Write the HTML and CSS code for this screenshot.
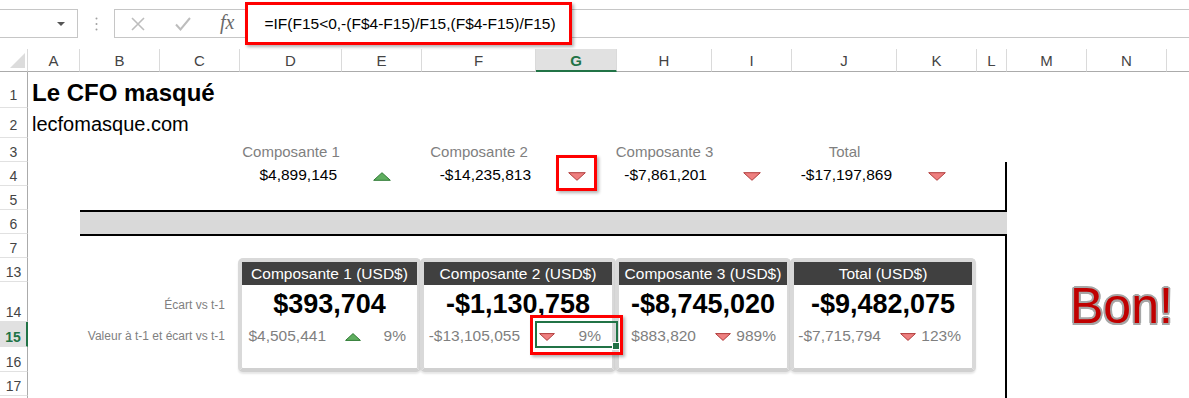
FILE: index.html
```html
<!DOCTYPE html>
<html lang="fr">
<head>
    <meta charset="UTF-8">
    <meta name="viewport" content="width=device-width, initial-scale=1.0">
    <title>Le CFO masqué</title>
    <link rel="stylesheet" href="styles.css">
</head>
<body>
    <!-- Formula bar -->
    <div class="formula-bar">
        <div class="name-box"><span class="name-arrow"></span></div>
        <div class="bar-grip">
            <svg width="3" height="14" viewBox="0 0 3 14"><circle cx="1.5" cy="1.5" r="1" fill="#a0a0a0"/><circle cx="1.5" cy="7" r="1" fill="#a0a0a0"/><circle cx="1.5" cy="12.5" r="1" fill="#a0a0a0"/></svg>
        </div>
        <div class="formula-area">
            <svg class="fb-cancel" width="14" height="14" viewBox="0 0 14 14"><path d="M1 1 L13 13 M13 1 L1 13" stroke="#bdbdbd" stroke-width="1.6" fill="none"/></svg>
            <svg class="fb-enter" width="16" height="14" viewBox="0 0 16 14"><path d="M1 7.5 L5.5 12.5 L15 1" stroke="#bdbdbd" stroke-width="2" fill="none"/></svg>
            <span class="fb-fx">fx</span>
            <div class="formula-text">=IF(F15&lt;0,-(F$4-F15)/F15,(F$4-F15)/F15)</div>
        </div>
    </div>

    <!-- Sheet -->
    <div class="sheet">
        <div class="corner"><svg width="27" height="22" viewBox="0 0 27 22"><polygon points="25,4 25,19 10,19" fill="#dcdcdc"/></svg></div>
        <div class="ch">A</div>
        <div class="ch">B</div>
        <div class="ch">C</div>
        <div class="ch">D</div>
        <div class="ch">E</div>
        <div class="ch">F</div>
        <div class="ch ch-active">G</div>
        <div class="ch">H</div>
        <div class="ch">I</div>
        <div class="ch">J</div>
        <div class="ch">K</div>
        <div class="ch">L</div>
        <div class="ch">M</div>
        <div class="ch">N</div>
        <div class="ch ch-empty"></div>

        <div class="rh r1">1</div>
        <div class="rh r2">2</div>
        <div class="rh r3">3</div>
        <div class="rh r4">4</div>
        <div class="rh r5">5</div>
        <div class="rh r6">6</div>
        <div class="rh r7">7</div>
        <div class="rh r13">13</div>
        <div class="rh r14">14</div>
        <div class="rh rh-active r15">15</div>
        <div class="rh r16">16</div>
        <div class="rh r17">17</div>
        <div class="rh r18"></div>

        <div class="cell title r1">Le CFO masqué</div>
        <div class="cell site r2">lecfomasque.com</div>

        <div class="cell head-lbl r3 cD">Composante 1</div>
        <div class="cell head-lbl r3 cF">Composante 2</div>
        <div class="cell head-lbl r3 cH">Composante 3</div>
        <div class="cell head-lbl r3 cJ">Total</div>

        <div class="cell num r4 cD">$4,899,145</div>
        <div class="cell ico r4 cE"><svg width="18" height="9" viewBox="0 0 18 9"><polygon points="9,0.7 17.3,8.3 0.7,8.3" fill="#5fae5f" stroke="#2e7a34" stroke-width="1"/></svg></div>
        <div class="cell num r4 cF">-$14,235,813</div>
        <div class="cell ico r4 cG"><svg width="18" height="9" viewBox="0 0 18 9"><polygon points="0.7,0.7 17.3,0.7 9,8.3" fill="#ee8080" stroke="#b03c3c" stroke-width="1"/></svg></div>
        <div class="cell num r4 cH">-$7,861,201</div>
        <div class="cell ico r4 cI"><svg width="18" height="9" viewBox="0 0 18 9"><polygon points="0.7,0.7 17.3,0.7 9,8.3" fill="#ee8080" stroke="#b03c3c" stroke-width="1"/></svg></div>
        <div class="cell num r4 cJ">-$17,197,869</div>
        <div class="cell ico r4 cK"><svg width="18" height="9" viewBox="0 0 18 9"><polygon points="0.7,0.7 17.3,0.7 9,8.3" fill="#ee8080" stroke="#b03c3c" stroke-width="1"/></svg></div>
        <div class="mark mark-g4"></div>

        <div class="vline vline-top"></div>
        <div class="band"></div>
        <div class="vline vline-bottom"></div>

        <div class="cell side-lbl side-14 r14">Écart vs t-1</div>
        <div class="cell side-lbl side-15 r15">Valeur à t-1 et écart vs t-1</div>

        <div class="card card-1">
            <div class="card-head">Composante 1 (USD$)</div>
            <div class="card-big">$393,704</div>
            <div class="card-sub">
                <span class="card-prev">$4,505,441</span>
                <span class="card-pct"><svg width="16" height="8" viewBox="0 0 16 8"><polygon points="8,0.6 15.4,7.4 0.6,7.4" fill="#5fae5f" stroke="#2e7a34" stroke-width="1"/></svg>9%</span>
            </div>
        </div>
        <div class="card card-2">
            <div class="card-head">Composante 2 (USD$)</div>
            <div class="card-big">-$1,130,758</div>
            <div class="card-sub">
                <span class="card-prev">-$13,105,055</span>
                <span class="card-pct"><svg width="16" height="8" viewBox="0 0 16 8"><polygon points="0.6,0.6 15.4,0.6 8,7.4" fill="#ee8080" stroke="#b03c3c" stroke-width="1"/></svg>9%</span>
            </div>
        </div>
        <div class="card card-3">
            <div class="card-head">Composante 3 (USD$)</div>
            <div class="card-big">-$8,745,020</div>
            <div class="card-sub">
                <span class="card-prev">$883,820</span>
                <span class="card-pct"><svg width="16" height="8" viewBox="0 0 16 8"><polygon points="0.6,0.6 15.4,0.6 8,7.4" fill="#ee8080" stroke="#b03c3c" stroke-width="1"/></svg>989%</span>
            </div>
        </div>
        <div class="card card-4">
            <div class="card-head">Total (USD$)</div>
            <div class="card-big">-$9,482,075</div>
            <div class="card-sub">
                <span class="card-prev">-$7,715,794</span>
                <span class="card-pct"><svg width="16" height="8" viewBox="0 0 16 8"><polygon points="0.6,0.6 15.4,0.6 8,7.4" fill="#ee8080" stroke="#b03c3c" stroke-width="1"/></svg>123%</span>
            </div>
        </div>

        <div class="sel"></div>
        <div class="mark mark-g15"></div>

        <div class="bon">Bon!</div>
    </div>
</body>
</html>
```

FILE: styles.css
```css
/* General */
* {
    box-sizing: border-box;
}

body {
    margin: 0;
    background: #fff;
    color: #000;
    font-family: "Liberation Sans", Arial, sans-serif;
    overflow: hidden;
}

/* Formula bar */
.formula-bar {
    display: flex;
    align-items: center;
    height: 29px;
    margin: 9px 0 11px;
}

.name-box {
    width: 78px;
    height: 29px;
    border: 1px solid #c6c6c6;
    border-left: none;
    display: flex;
    align-items: center;
    justify-content: flex-end;
    padding-right: 12px;
}

.name-arrow {
    width: 0;
    height: 0;
    border-left: 4px solid transparent;
    border-right: 4px solid transparent;
    border-top: 4px solid #555;
}

.bar-grip {
    width: 36px;
    display: flex;
    justify-content: center;
}

.formula-area {
    flex: 1;
    height: 29px;
    border: 1px solid #c6c6c6;
    border-right: none;
    display: flex;
    align-items: center;
    padding-left: 16px;
}

.fb-cancel {
    margin-right: 30px;
}

.fb-enter {
    margin-right: 29px;
}

.fb-fx {
    font-family: "Liberation Serif", serif;
    font-style: italic;
    font-size: 20px;
    color: #6a6a6a;
    margin-right: 11px;
    margin-top: -2px;
}

.formula-text {
    width: 327px;
    height: 43px;
    border: 3px solid #ff0000;
    box-shadow: 2px 2px 3px rgba(0, 0, 0, 0.3);
    padding-left: 16px;
    font-size: 15.5px;
    line-height: 37px;
    white-space: nowrap;
    background: #fff;
}

/* Sheet grid */
.sheet {
    display: grid;
    grid-template-columns: [rh] 28px [a] 52px [b] 80px [c] 80px [d] 102px [e] 80px [f] 114px [g] 81px [h] 95px [i] 80px [j] 105px [k] 80px [l] 30px [m] 80px [n] 80px [o] 1fr;
    grid-template-rows: [hdr] 23px [r1] 36px [r2] 30px [r3] 24px [r4] 24px [r5] 24px [r6] 24px [r7] 24px [r13] 24px [r14] 40px [r15] 25px [r16] 25px [r17] 24px [r18] 2px;
}

.r1 { grid-row: r1; }
.r2 { grid-row: r2; }
.r3 { grid-row: r3; }
.r4 { grid-row: r4; }
.r5 { grid-row: r5; }
.r6 { grid-row: r6; }
.r7 { grid-row: r7; }
.r13 { grid-row: r13; }
.r14 { grid-row: r14; }
.r15 { grid-row: r15; }
.r16 { grid-row: r16; }
.r17 { grid-row: r17; }
.r18 { grid-row: r18; }

.cD { grid-column: d; }
.cE { grid-column: e; }
.cF { grid-column: f; }
.cG { grid-column: g; }
.cH { grid-column: h; }
.cI { grid-column: i; }
.cJ { grid-column: j; }
.cK { grid-column: k; }

/* Headers */
.corner {
    grid-row: hdr;
    border-right: 1px solid #dadada;
    border-bottom: 1px solid #ababab;
}

.corner svg {
    display: block;
}

.ch {
    grid-row: hdr;
    border-right: 1px solid #dadada;
    border-bottom: 1px solid #ababab;
    text-align: center;
    font-size: 15px;
    line-height: 22px;
    padding-top: 1px;
    color: #444;
}

.ch-empty {
    border-right: none;
}

.ch-active {
    background: #e1e1e1;
    color: #217346;
    font-weight: bold;
    border-bottom: 2px solid #217346;
    line-height: 21px;
}

.rh {
    grid-column: rh;
    border-right: 1px solid #ababab;
    border-bottom: 1px solid #e1e1e1;
    display: flex;
    align-items: flex-end;
    justify-content: center;
    padding-bottom: 1px;
    font-size: 14px;
    color: #444;
}

.rh.r1,
.rh.r2 {
    padding-bottom: 4px;
}

.rh.r18 {
    border-bottom: none;
}

.rh-active {
    background: #e1e1e1;
    color: #217346;
    font-weight: bold;
    border-right: 2px solid #217346;
}

/* Cells */
.cell {
    display: flex;
    align-items: flex-end;
    padding: 0 4px 2px;
    white-space: nowrap;
    font-size: 15.5px;
}

.title {
    grid-column: a / l;
    font-size: 24px;
    font-weight: bold;
    padding-bottom: 1px;
}

.site {
    grid-column: a / l;
    font-size: 20px;
}

.head-lbl {
    justify-content: center;
    color: #7f7f7f;
    font-size: 15px;
}

.num {
    justify-content: flex-end;
    padding-right: 5px;
}

.ico {
    justify-content: center;
    padding-bottom: 5px;
}

.ico svg {
    display: block;
}

.side-lbl {
    grid-column: a / d;
    justify-content: flex-end;
    padding-right: 15px;
    font-size: 12px;
    color: #7f7f7f;
}

.side-14 {
    padding-bottom: 10px;
}

.side-15 {
    padding-bottom: 4px;
}

/* Borders of the frame */
.band {
    grid-column: b / m;
    grid-row: r6;
    background: #d9d9d9;
    border-top: 2px solid #000;
    border-bottom: 2px solid #000;
    margin-bottom: -2px;
}

.vline {
    grid-column: l;
    border-right: 2px solid #000;
}

.vline-top {
    grid-row: r4 / r6;
}

.vline-bottom {
    grid-row: r7 / -1;
}

/* KPI cards */
.card {
    grid-row: r13 / r17;
    margin: 0 1px 0 -2px;
    border: 4px solid #d9d9d9;
    border-bottom-color: #d0d0d0;
    border-radius: 5px;
    background: #fff;
    box-shadow: 0 2px 2px rgba(0, 0, 0, 0.1);
    display: flex;
    flex-direction: column;
}

.card-1 { grid-column: d / f; }
.card-2 { grid-column: f / h; }
.card-3 { grid-column: h / j; }
.card-4 { grid-column: j / l; }

.card-head {
    height: 23px;
    background: #404040;
    color: #fff;
    text-align: center;
    font-size: 15.5px;
    line-height: 23px;
    white-space: nowrap;
}

.card-big {
    height: 37px;
    line-height: 38px;
    text-align: center;
    font-size: 27px;
    font-weight: bold;
    white-space: nowrap;
}

.card-sub {
    display: grid;
    height: 25px;
    padding-top: 2px;
    font-size: 15.5px;
    line-height: 23px;
    color: #7f7f7f;
    white-space: nowrap;
}

.card-1 .card-sub { grid-template-columns: 100px 1fr; }
.card-2 .card-sub { grid-template-columns: 112px 1fr; }
.card-3 .card-sub { grid-template-columns: 93px 1fr; }
.card-4 .card-sub { grid-template-columns: 103px 1fr; }

.card-prev {
    text-align: right;
    padding-right: 16px;
}

.card-pct {
    display: flex;
    align-items: baseline;
    justify-content: space-between;
    padding: 0 11px 0 3px;
}

/* Active cell and annotations */
.sel {
    grid-column: g;
    grid-row: r15;
    margin: -1px;
    border: 2px solid #217346;
    position: relative;
    z-index: 2;
}

.sel::after {
    content: "";
    position: absolute;
    right: -4px;
    bottom: -4px;
    width: 6px;
    height: 6px;
    background: #217346;
    border: 1px solid #fff;
}

.mark {
    grid-column: g;
    border: 3px solid #ff0000;
    box-shadow: 2px 2px 3px rgba(0, 0, 0, 0.3);
    z-index: 3;
}

.mark-g4 {
    grid-row: r4;
    width: 41px;
    justify-self: center;
    margin: -7px 0 -5px;
}

.mark-g15 {
    grid-row: r15;
    margin: -7px -6px -8px -6px;
}

.bon {
    grid-column: m / -1;
    grid-row: r14 / r16;
    padding-left: 63px;
    margin-top: -1px;
    font-size: 50px;
    line-height: 1;
    color: #c00000;
    white-space: nowrap;
    text-shadow: -2px 0 #a6a6a6, 2px 0 #a6a6a6, 0 -2px #a6a6a6, 0 2px #a6a6a6,
        -1.5px -1.5px #a6a6a6, 1.5px -1.5px #a6a6a6, -1.5px 1.5px #a6a6a6, 1.5px 1.5px #a6a6a6;
}
```
